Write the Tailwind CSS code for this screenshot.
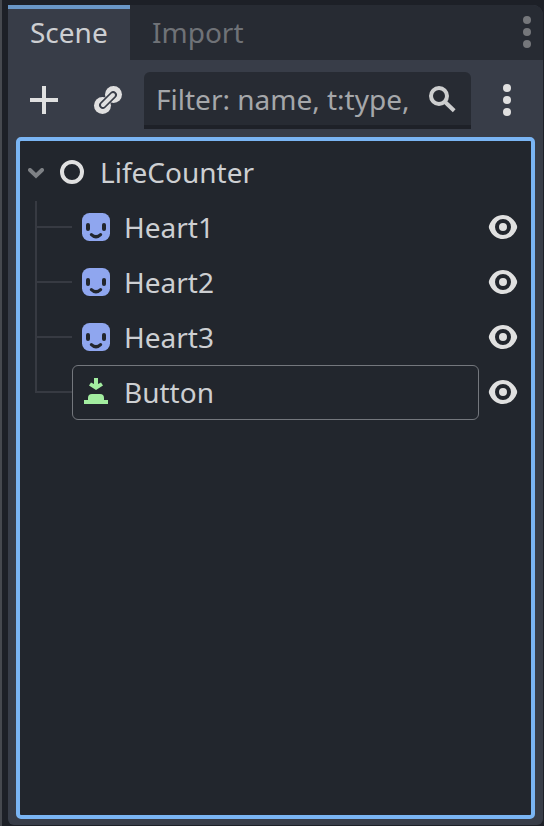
<!DOCTYPE html>
<html lang="en">
<head>
<meta charset="utf-8">
<title>Scene dock</title>
<script src="https://cdn.jsdelivr.net/npm/@tailwindcss/browser@4"></script>
</head>
<body class="h-[826px] w-[544px] overflow-hidden bg-[#1d2027] font-['Noto_Sans',sans-serif] text-[28px] leading-[38px] text-[#cdcfd2]">
<svg class="hidden">
  <symbol id="sprite" viewBox="0 0 16 16"><rect x="1" y="1" width="14" height="14" rx="3.800" fill="#8fa6ef"/><g fill="#22262d"><rect x="3" y="6" width="2" height="4" rx="1"/><rect x="11" y="6" width="2" height="4" rx="1"/></g><path d="M5.700 11.800Q8 14 10.300 11.800" fill="none" stroke="#22262d" stroke-width="1.600" stroke-linecap="round"/></symbol>
  <symbol id="eye" viewBox="0 0 16 16"><path fill="#e0e0e0" fill-rule="evenodd" d="M8 2C5 2 2.2 4 1.05 7.3a2 2 0 0 0 0 1.4C2.2 12 5 14 8 14s5.800-2 6.950-5.300a2 2 0 0 0 0-1.400C13.800 4 11 2 8 2zm0 2a4 4 0 0 1 0 8 4 4 0 0 1 0-8zm0 2a2 2 0 0 0 0 4 2 2 0 0 0 0-4z"/></symbol>
  <symbol id="dots" viewBox="0 0 8 32"><circle cx="4" cy="4" r="4"/><circle cx="4" cy="16" r="4"/><circle cx="4" cy="28" r="4"/></symbol>
</svg>
<div class="flex h-full border-l-2 border-[#46494f] pt-[5px] pr-px pl-[6px]">
  <main class="flex h-[820px] w-full flex-col overflow-hidden rounded-tr-[10px] rounded-b-[6px] bg-[#383d48]">
    <nav class="flex h-[55px] shrink-0 bg-[#272b33]">
      <div class="w-[122px] border-t-4 border-[#6996c6] bg-[#383d48] pt-[4px] pl-[22px]">Scene</div>
      <div class="pt-[8px] pl-[22px] text-[#6f7277]">Import</div>
      <svg class="mt-[11px] mr-[12px] ml-auto h-8 w-2 fill-[#75777b]"><use href="#dots"/></svg>
    </nav>
    <header class="flex h-[77px] shrink-0 items-start pt-[12px]">
      <svg class="mt-[12px] ml-[20px] size-8" viewBox="0 0 16 16"><path fill="#e0e0e0" d="M7 1v6H1v2h6v6h2V9h6V7H9V1z"/></svg>
      <svg class="mt-[12px] ml-[32px] size-8" viewBox="0 0 32 32"><g fill="#e0e0e0"><circle cx="21.500" cy="10.500" r="8.500"/><circle cx="10.500" cy="21.500" r="8.500"/></g><g fill="none" stroke-linecap="round"><path d="M10.800 21.200L21.200 10.800" stroke="#383d48" stroke-width="7.400"/><path d="M11 21L21 11" stroke="#e0e0e0" stroke-width="4"/></g></svg>
      <div class="ml-[20px] flex h-[57px] w-[327px] rounded-t-[6px] border-b-4 border-[#1e2128] bg-[#272b33] pl-[12px]">
        <div class="w-[256px] shrink-0 overflow-hidden pt-[8px] whitespace-nowrap text-[#a5a7aa]">Filter: name, t:type,</div>
        <svg class="mt-[12px] ml-[14px] size-8" viewBox="0 0 16 16"><g fill="none" stroke="#cdcecf" stroke-width="2"><circle cx="6.500" cy="6" r="4"/><path d="M9 8.500l5.100 4.900"/></g></svg>
      </div>
      <svg class="mt-[12px] ml-[32px] h-8 w-2 fill-[#e0e0e0]"><use href="#dots"/></svg>
    </header>
    <section class="mx-2 h-[682px] rounded-[5px] border-4 border-[#7ab5f4] bg-[#22262d] pt-[4px]">
      <div class="flex h-[55px]">
        <svg class="mt-[23px] ml-[8px] h-[11px] w-4" viewBox="0 0 16 11"><path d="M2 2l6 5.700 6-5.700" fill="none" stroke="#7e8185" stroke-width="4" stroke-linecap="round"/></svg>
        <svg class="mt-[11px] ml-[12px] size-8" viewBox="0 0 16 16"><circle cx="8" cy="8" r="5" fill="none" stroke="#e0e0e0" stroke-width="2"/></svg>
        <span class="mt-[8px] ml-[12px]">LifeCounter</span>
      </div>
      <div class="flex">
        <svg class="h-[220px] w-[52px] shrink-0" viewBox="0 0 52 220"><path d="M16 1v191h36M16 27h36M16 82h36M16 137h36" fill="none" stroke="#373a42" stroke-width="2"/></svg>
        <div class="w-[407px]">
          <div class="flex h-[55px]"><svg class="mt-[11px] ml-2 size-8"><use href="#sprite"/></svg><span class="mt-[8px] ml-[12px]">Heart1</span></div>
          <div class="flex h-[55px]"><svg class="mt-[11px] ml-2 size-8"><use href="#sprite"/></svg><span class="mt-[8px] ml-[12px]">Heart2</span></div>
          <div class="flex h-[55px]"><svg class="mt-[11px] ml-2 size-8"><use href="#sprite"/></svg><span class="mt-[8px] ml-[12px]">Heart3</span></div>
          <div class="flex h-[55px] rounded-[6px] border border-[#74777d]"><svg class="mt-[10px] ml-[7px] size-8" viewBox="0 0 16 16"><path fill="#a3eda0" d="M7 1h2v3l1.500-.8 1 1.500L8 7 4.500 4.700l1-1.500L7 4zM2 12h2v-1a2 2 0 0 1 2-2h4a2 2 0 0 1 2 2v1h2v2H2z"/></svg><span class="mt-[7px] ml-[12px]">Button</span></div>
        </div>
        <div class="ml-[8px] w-8">
          <div class="h-[55px] pt-[11px]"><svg class="size-8"><use href="#eye"/></svg></div>
          <div class="h-[55px] pt-[11px]"><svg class="size-8"><use href="#eye"/></svg></div>
          <div class="h-[55px] pt-[11px]"><svg class="size-8"><use href="#eye"/></svg></div>
          <div class="h-[55px] pt-[11px]"><svg class="size-8"><use href="#eye"/></svg></div>
        </div>
      </div>
    </section>
  </main>
</div>
</body>
</html>
